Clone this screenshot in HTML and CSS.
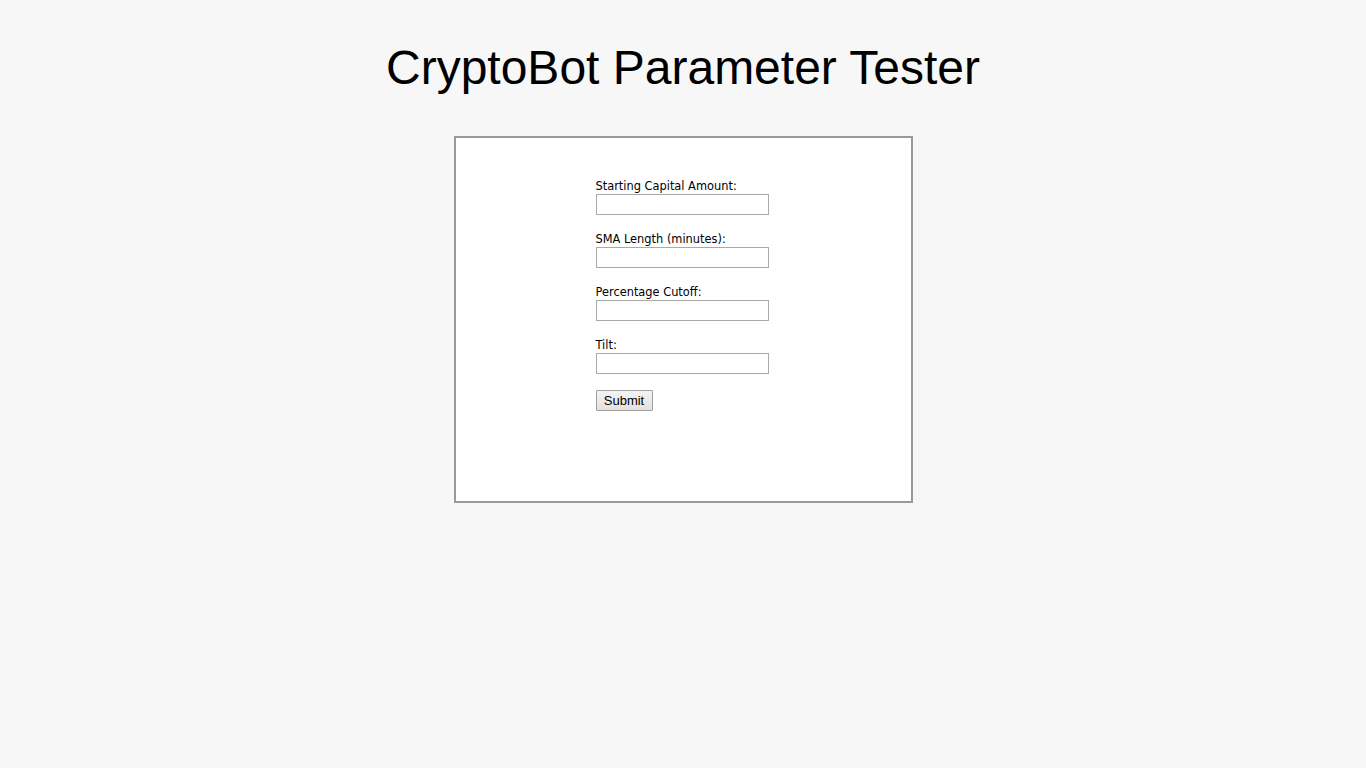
FILE: index.html
```html
<!DOCTYPE html>
<html>
<head>
<meta charset="utf-8">
<title>CryptoBot Parameter Tester</title>
<link rel="stylesheet" href="styles.css">
</head>
<body>
<h1 class="title">CryptoBot Parameter Tester</h1>
<div class="panel">
  <form class="params">
    <div class="field">
      <label class="field-label">Starting Capital Amount:</label>
      <input class="field-input" type="text">
    </div>
    <div class="field">
      <label class="field-label">SMA Length (minutes):</label>
      <input class="field-input" type="text">
    </div>
    <div class="field">
      <label class="field-label">Percentage Cutoff:</label>
      <input class="field-input" type="text">
    </div>
    <div class="field field-last">
      <label class="field-label">Tilt:</label>
      <input class="field-input" type="text">
    </div>
    <button class="submit" type="button">Submit</button>
  </form>
</div>
</body>
</html>
```

FILE: styles.css
```css
html, body {
  margin: 0;
  padding: 0;
  background: #f7f7f7;
}
.title {
  margin: 40px 0 0;
  height: 96px;
  font-family: "Liberation Sans", Arial, sans-serif;
  font-size: 48px;
  font-weight: normal;
  line-height: 55px;
  text-align: center;
  color: #000;
}
.panel {
  width: 455px;
  height: 363px;
  margin: 0 auto;
  background: #fff;
  border: 2px solid #999;
}
.params {
  width: 175px;
  margin: 0 auto;
  padding-top: 41px;
  display: flex;
  flex-direction: column;
  align-items: flex-start;
}
.field {
  display: flex;
  flex-direction: column;
  align-items: flex-start;
  margin-bottom: 17px;
}
.field-last {
  margin-bottom: 16px;
}
.field-label {
  font-family: "DejaVu Sans", Verdana, sans-serif;
  font-size: 11.4px;
  line-height: 15px;
  color: #000;
}
.field-input {
  box-sizing: border-box;
  width: 173px;
  height: 21px;
  margin: 0;
  padding: 1px 2px;
  border: 1px solid #a9a9a9;
  background: #fff;
}
.submit {
  box-sizing: border-box;
  width: 57px;
  height: 21px;
  margin: 0;
  padding: 0;
  font-family: "Liberation Sans", Arial, sans-serif;
  font-size: 13px;
  color: #000;
  border: 1px solid #a0a0a0;
  border-radius: 1px;
  background: linear-gradient(#f4f4f4, #e1e1e1);
}
```
